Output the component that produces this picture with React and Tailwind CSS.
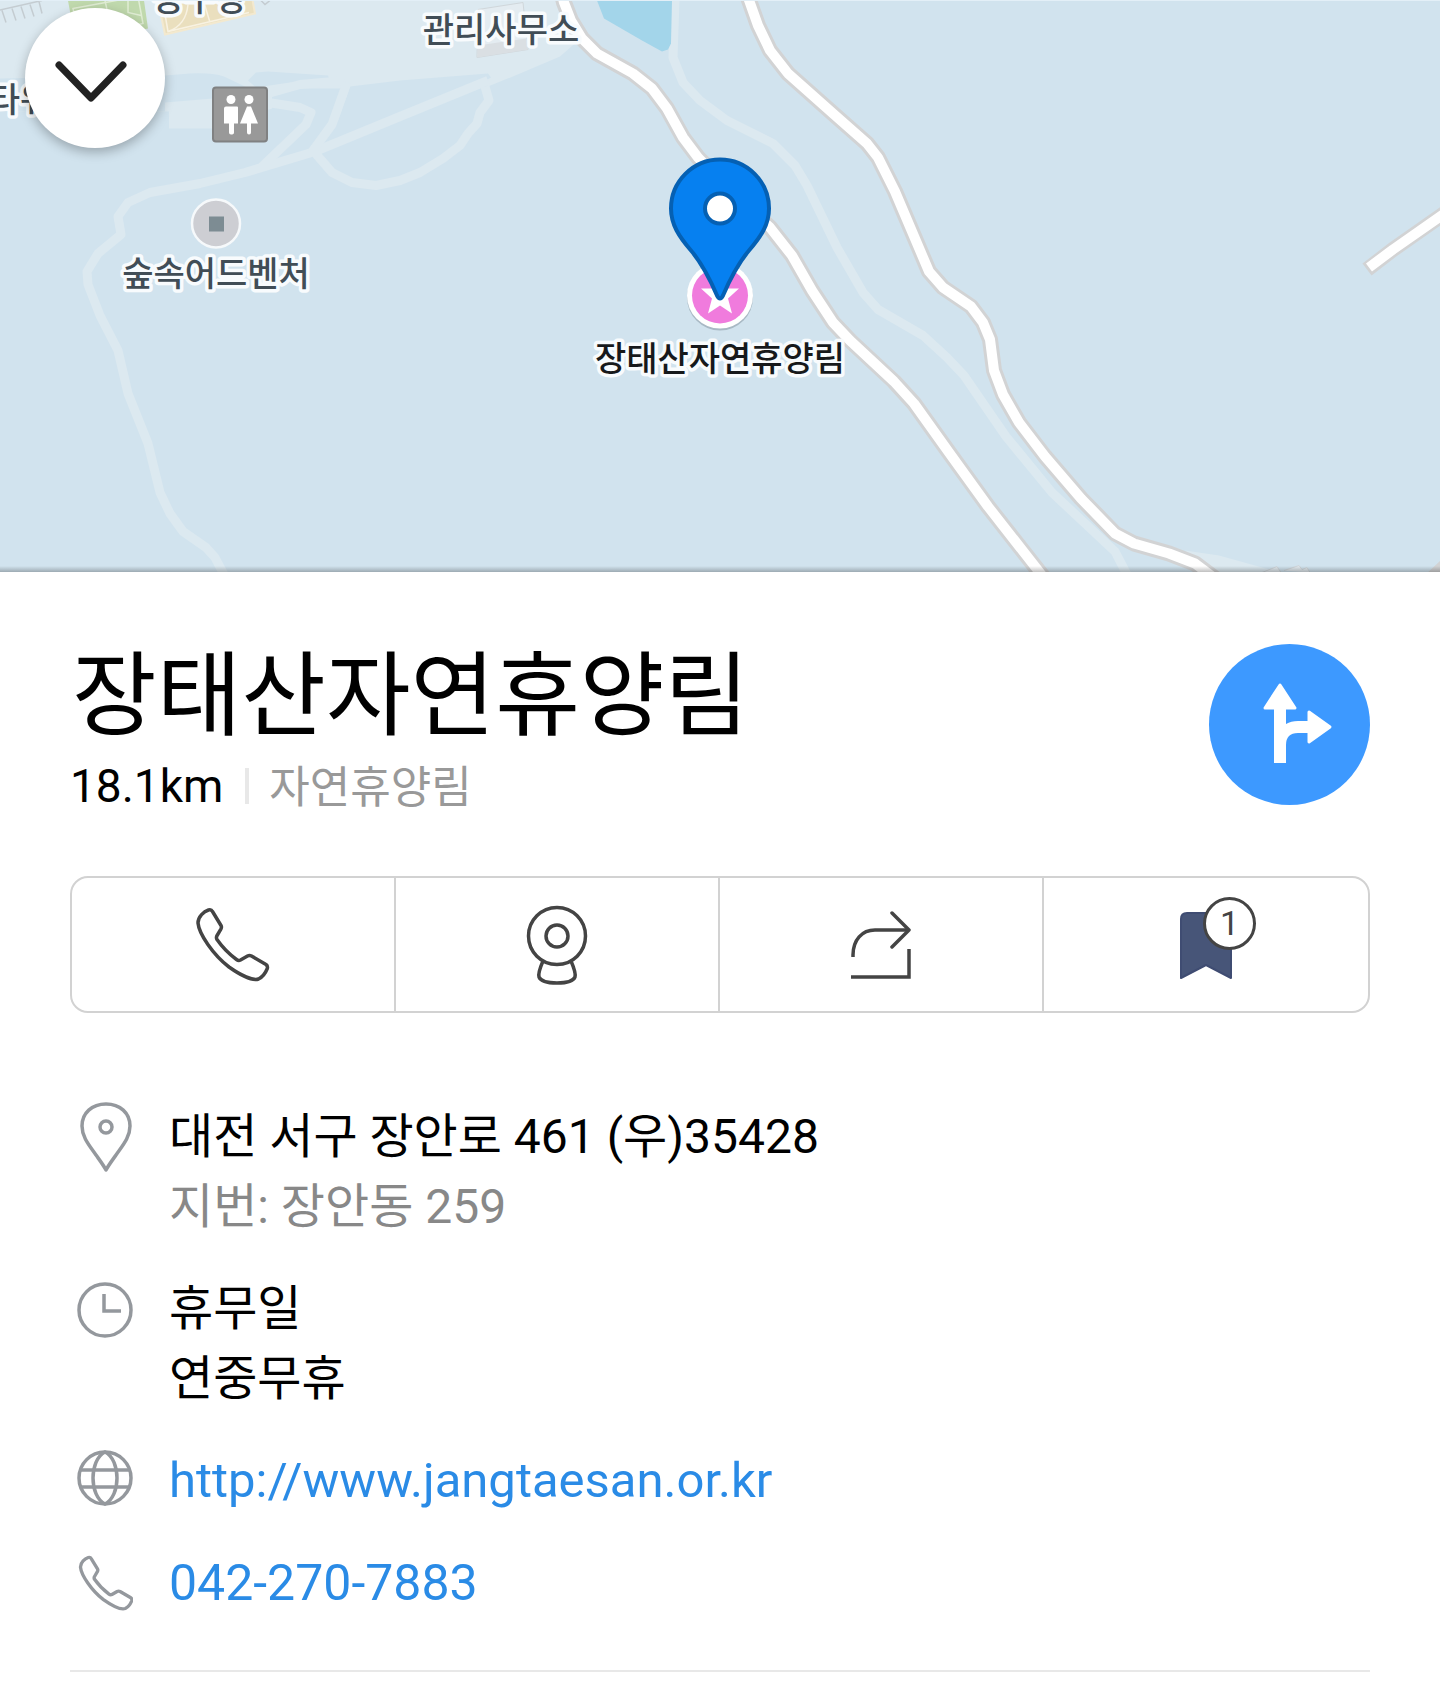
const LIGHT = '#dce9f0';

const LIGHT_PATHS = [
  'M488 80 L400 116 L315 151 L245 172 L200 183 L150 192 L128 202 L118 216 L121 234 L98 253 L87 271 L88 284 L100 315 L118 350 L128 393 L148 443 L160 492 L170 513 L183 531 L206 547 L215 557 L226 578',
  'M268 102 L300 107 L311 112 L306 124 L262 166',
  'M268 93 L300 84 L345 80',
  'M347 82 L332 124 L313 150 L332 172 L352 182 L376 185 L400 180 L420 172 L443 158 L460 145 L468 133 L477 123 L480 112 L489 100 L485 86',
];

const RIVER_PATH =
  'M675 0 L673 57 L683 82 L700 100 L727 120 L773 143 L795 165 L807 185 L837 247 L863 292 L878 309 L923 335 L947 357 L964 375 L1006 436 L1052 492 L1115 551 L1128 576';

const ROADS = [
  'M562 -6 L564 2 L571 20 L582 38 L597 53 L633 73 L652 88 L667 108 L683 137 L698 157 L740 200 L770 227 L792 255 L812 290 L833 322 L850 340 L894 381 L914 403 L949 452 L988 506 L1046 580',
  'M747 -6 L758 25 L770 50 L788 73 L833 113 L867 143 L878 157 L895 191 L929 271 L943 287 L971 306 L983 322 L990 339 L994 370 L1003 394 L1019 422 L1045 456 L1081 498 L1115 533 L1134 543 L1169 553 L1195 563 L1215 578',
];

function MapLabel({ x, y, fill = '#414d56', children }) {
  return (
    <text
      x={x}
      y={y}
      fill={fill}
      textAnchor="middle"
      stroke="#f8fbfd"
      strokeWidth="7"
      strokeLinejoin="round"
      paintOrder="stroke"
      className="font-['Noto_Sans_CJK_KR',sans-serif] text-[34px] font-medium"
    >
      {children}
    </text>
  );
}

function MapView() {
  return (
    <svg viewBox="0 0 1440 572" preserveAspectRatio="xMidYMid slice" className="block h-full w-full" role="img" aria-label="지도">
      <rect width="1440" height="572" fill="#d1e3ee" />

      <path d="M0 0 H566 L576 42 L560 56 L520 73 L488 86 L482 82 L491 77 L488 73 L400 80 L350 86 L338 120 L322 145 L342 88 L300 88 L272 96 L272 108 L215 128 L169 128 V111 L0 111Z" fill={LIGHT} />
      <path d="M0 111 V78 L165 75 L190 73 Q212 72 224 76 L247 87 L225 97 L165 102 V111Z" fill="#d1e3ee" />
      <path d="M248 80 L256 72 L268 71 L328 75 L329 78 L290 82 L256 87Z" fill="#d1e3ee" />

      <g fill="none" stroke={LIGHT} strokeWidth="9" strokeLinejoin="round">
        {LIGHT_PATHS.map((d) => (
          <path key={d} d={d} />
        ))}
        <path d={RIVER_PATH} />
      </g>
      <path d="M1185 550 L1219 555 L1280 572 H1210Z" fill={LIGHT} />
      <path d="M1262 572 L1277 566 L1281 572 M1284 570 L1299 565 L1302 569 L1307 567 L1310 572" fill="#e3ebf0" stroke="#cfd6da" />

      <path d="M597 0 L604 18 L642 40 L662 51 L668 49 L671 43 L672 0Z" fill="#a3d5ea" />

      <path d="M-2 10 L42 0 M2 10 L6 22 M12 8 L16 20 M21 6 L25 18 M30 4 L34 16 M39 1 L42 13" fill="none" stroke="#c4ccd1" strokeWidth="1.5" />
      <path d="M261 0 L265 4 L270 0" fill="none" stroke="#c4ccd1" strokeWidth="1.5" />

      <path d="M68 0 L144 0 L148 28 L76 44Z" fill="#c0d9ad" />
      <path d="M73 8 L138 -4 L143 23 L80 38Z M105 0 L112 32 M128 0 V12 L141 15" fill="none" stroke="#e0edd4" strokeWidth="1.5" />
      <path d="M158 0 L250 -14 L255 13 L165 34Z" fill="#eadfbe" stroke="#f3e9cf" strokeWidth="2" />
      <path d="M164 8 L168 31 L249 12 M204 2 L210 22 M168 31 Q186 25 188 4" fill="none" stroke="#f8f2e2" strokeWidth="1.5" />

      <path d="M478 9 L523 2 L528 49 L477 57Z" fill="#e4ecf1" stroke="#d0d7db" />
      <path d="M478 45 L526 38 L528 49 L477 57Z" fill="#dadfe3" />

      <g fill="none" strokeLinejoin="round">
        <g stroke="#d2d3d4" strokeWidth="16">
          {ROADS.map((d) => (
            <path key={d} d={d} />
          ))}
          <path d="M1367 269 L1393 249 L1450 209" strokeWidth="15" />
          <path d="M1433 578 L1450 562" />
        </g>
        <g stroke="#ffffff" strokeWidth="10">
          {ROADS.map((d) => (
            <path key={d} d={d} />
          ))}
          <path d="M1369 267 L1393 249 L1450 209" />
        </g>
      </g>

      <rect x="213" y="87" width="54" height="54" rx="3" fill="#999999" stroke="#808182" strokeWidth="2" />
      <g fill="#ffffff">
        <circle cx="231" cy="99" r="4.5" />
        <path d="M226 106 H237 Q238 106 238 107 V123 H234 V132 Q234 134 231 134 Q229 134 229 132 V123 H224 V108 Q224 106 226 106Z" />
        <circle cx="249" cy="99" r="4.5" />
        <path d="M247 106 H251 L258 123 H251 V132 Q251 134 249 134 Q247 134 247 132 V123 H240Z" />
      </g>

      <circle cx="216" cy="223" r="24" fill="#cdced3" stroke="#f6f9fb" strokeWidth="2.5" />
      <rect x="209" y="216" width="15" height="15" fill="#7d8c93" />

      <MapLabel x={200} y={10}>농구장</MapLabel>
      <MapLabel x={501} y={41}>관리사무소</MapLabel>
      <MapLabel x={-27} y={111}>스카이타워</MapLabel>
      <MapLabel x={216} y={285}>숲속어드벤처</MapLabel>
      <MapLabel x={720} y={370} fill="#17191b">장태산자연휴양림</MapLabel>

      <circle cx="720" cy="297" r="33" fill="#5b6a75" opacity="0.35" />
      <circle cx="720" cy="295" r="33" fill="#ffffff" />
      <circle cx="720" cy="295" r="28" fill="#f07bdd" />
      <path d="M720 275 L725 288 L739 288 L728 298 L732 313 L720 305 L708 313 L712 298 L701 288 L715 288Z" fill="#ffffff" />
      <path
        d="M720 159 C747 159 769 181 769 208 C769 224 761 236 749 250 C738 263 729 281 723 295 Q720 301 717 295 C711 281 702 263 691 250 C679 236 671 224 671 208 C671 181 693 159 720 159Z"
        fill="#0680f0"
        stroke="#0560b3"
        strokeWidth="4"
      />
      <circle cx="720" cy="208" r="15" fill="#ffffff" stroke="#0560b3" strokeWidth="4" />
    </svg>
  );
}

const PHONE_PATH =
  'M16.5 3.5 L25 17.5 Q25.9 19 25 20.8 L20.8 28 Q20 29.8 21 31.5 Q29 43 40.5 51.5 Q42.5 53 44.5 52 L51.5 48 Q53.5 47 55.5 48 L70 56.5 Q72 58 71.3 60.5 C69.5 65 66.5 69 62.5 71 C57 73 45 67.5 33 59 C17 46.5 3 26 2 15 C2 8.5 8 3.5 12.5 2 Q15.3 1.2 16.5 3.5Z';

function ActionPhone() {
  return (
    <svg viewBox="0 0 74 74" className="size-[74px]" fill="none" stroke="#444444" strokeWidth="3.5" strokeLinejoin="round" aria-hidden="true">
      <path d={PHONE_PATH} />
    </svg>
  );
}

function ActionRoadview() {
  return (
    <svg viewBox="0 0 80 80" className="size-20" fill="none" stroke="#444444" strokeWidth="3.5" aria-hidden="true">
      <circle cx="40" cy="31" r="28.5" />
      <circle cx="40" cy="31" r="11" />
      <path d="M26 56 C23 63 21 69 22 72 C24 77 31 78 40 78 C49 78 56 77 58 72 C59 69 57 63 54 56" />
    </svg>
  );
}

function ActionShare() {
  return (
    <svg viewBox="0 0 60 70" className="h-[70px] w-[60px]" fill="none" stroke="#444444" strokeWidth="3.5" aria-hidden="true">
      <path d="M2 47 V45 C2 30 11 20 24 20 H58" />
      <path d="M41 3 L58 20 L41 37" strokeLinecap="round" strokeLinejoin="round" />
      <path d="M0 67 H58 V39" />
    </svg>
  );
}

function ActionBookmark() {
  return (
    <span className="relative block h-[70px] w-[54px]">
      <svg viewBox="0 0 54 70" className="block size-full" aria-hidden="true">
        <path d="M8 3 H52 V68 L27 55 L2 68 V9 Q2 3 8 3Z" fill="#475578" stroke="#3f4c72" strokeWidth="2" strokeLinejoin="round" />
      </svg>
      <span className="absolute -top-[13px] left-6 flex size-[53px] items-center justify-center rounded-full border-[3px] border-[#444444] bg-white text-[34px] leading-none text-[#444444]">
        1
      </span>
    </span>
  );
}

const ACTIONS = [
  { label: '전화', Icon: ActionPhone },
  { label: '로드뷰', Icon: ActionRoadview },
  { label: '공유', Icon: ActionShare },
  { label: '즐겨찾기', Icon: ActionBookmark },
];

function InfoIcon({ children }) {
  return (
    <svg viewBox="0 0 56 70" className="h-[70px] w-14 shrink-0" fill="none" stroke="#94989d" strokeWidth="3.5" strokeLinejoin="round" aria-hidden="true">
      {children}
    </svg>
  );
}

function InfoRow({ icon, children }) {
  return (
    <li className="flex gap-9">
      <InfoIcon>{icon}</InfoIcon>
      <div className="min-w-0 text-[48px] leading-[70px]">{children}</div>
    </li>
  );
}

export default function App() {
  return (
    <div className="min-h-screen bg-white font-['Roboto','Noto_Sans_CJK_KR',sans-serif] text-black">
      <section className="relative h-[572px] overflow-hidden border-t border-[#e3eff7]">
        <MapView />
        <div className="absolute inset-x-0 bottom-0 h-1.5 bg-linear-to-b from-transparent to-black/25" />
        <button
          type="button"
          aria-label="닫기"
          className="absolute top-[7px] left-[25px] flex size-[140px] items-center justify-center rounded-full bg-white shadow-[0_4px_12px_rgba(0,0,0,0.28)]"
        >
          <svg viewBox="0 0 140 140" className="size-full" fill="none" stroke="#222222" strokeWidth="7" strokeLinecap="round" strokeLinejoin="round" aria-hidden="true">
            <path d="M34 57 L66 90 L98 57" />
          </svg>
        </button>
      </section>

      <main className="px-[70px] pt-[60px]">
        <header className="flex items-center justify-between">
          <div>
            <h1 className="pl-0.5 font-['Noto_Sans_CJK_KR',sans-serif] text-[92px] leading-[112px]">장태산자연휴양림</h1>
            <div className="mt-3 flex items-center leading-[60px]">
              <span className="text-[46px]">18.1km</span>
              <span className="mr-5 ml-[22px] h-9 w-1 bg-[#e8e8e8]" />
              <span className="pb-1 font-['Noto_Sans_CJK_KR',sans-serif] text-[44px] leading-[56px] text-[#999999]">자연휴양림</span>
            </div>
          </div>
          <button type="button" aria-label="길찾기" className="size-[161px] shrink-0 rounded-full bg-[#3d99ff]">
            <svg viewBox="0 0 161 161" className="size-full" fill="#ffffff" stroke="#ffffff" strokeLinejoin="round" aria-hidden="true">
              <path d="M65 119 V64 H77 V80 Q82 77 89 77 H99 V89 H89 Q77 89 77 101 V119Z" stroke="none" />
              <path d="M71 41 L86 64 H56Z" strokeWidth="3" />
              <path d="M100 68 L121 83 L100 98Z" strokeWidth="3" />
            </svg>
          </button>
        </header>

        <div className="mt-[60px] grid h-[137px] grid-cols-4 divide-x-2 divide-[#d2d2d2] overflow-hidden rounded-[18px] border-2 border-[#d2d2d2]">
          {ACTIONS.map(({ label, Icon }) => (
            <button key={label} type="button" aria-label={label} className="flex items-center justify-center">
              <Icon />
            </button>
          ))}
        </div>

        <ul className="mt-[89px] flex flex-col gap-8 border-b-2 border-[#e8e8e8] pb-[51px] pl-[7px]">
          <InfoRow
            icon={
              <>
                <path d="M29 2 C43 2 53 11 53 24 C53 35 46 43 39 53 C34 60 31 64 29 68 C27 64 24 60 19 53 C12 43 5 35 5 24 C5 11 15 2 29 2Z" />
                <circle cx="29" cy="25" r="6" />
              </>
            }
          >
            <p>대전 서구 장안로 461 (우)35428</p>
            <p className="text-[#888888]">지번: 장안동 259</p>
          </InfoRow>
          <InfoRow
            icon={
              <>
                <circle cx="28" cy="36" r="26" />
                <path d="M27 20 V37 H44" strokeLinejoin="miter" />
              </>
            }
          >
            <p>휴무일</p>
            <p>연중무휴</p>
          </InfoRow>
          <InfoRow
            icon={
              <>
                <circle cx="28" cy="32" r="26" />
                <path d="M3 24 H53 M3 41 H53" />
                <path d="M28 6 C20 10 16 21 16 32 C16 43 20 54 28 58 C36 54 40 43 40 32 C40 21 36 10 28 6Z" />
              </>
            }
          >
            <a href="http://www.jangtaesan.or.kr" className="text-[49px] text-[#2a8be6]">
              http://www.jangtaesan.or.kr
            </a>
          </InfoRow>
          <InfoRow icon={<path d={PHONE_PATH} transform="translate(2 8) scale(0.74)" strokeWidth="4.5" />}>
            <a href="tel:042-270-7883" className="text-[50px] text-[#2a8be6]">
              042-270-7883
            </a>
          </InfoRow>
        </ul>
      </main>
    </div>
  );
}
